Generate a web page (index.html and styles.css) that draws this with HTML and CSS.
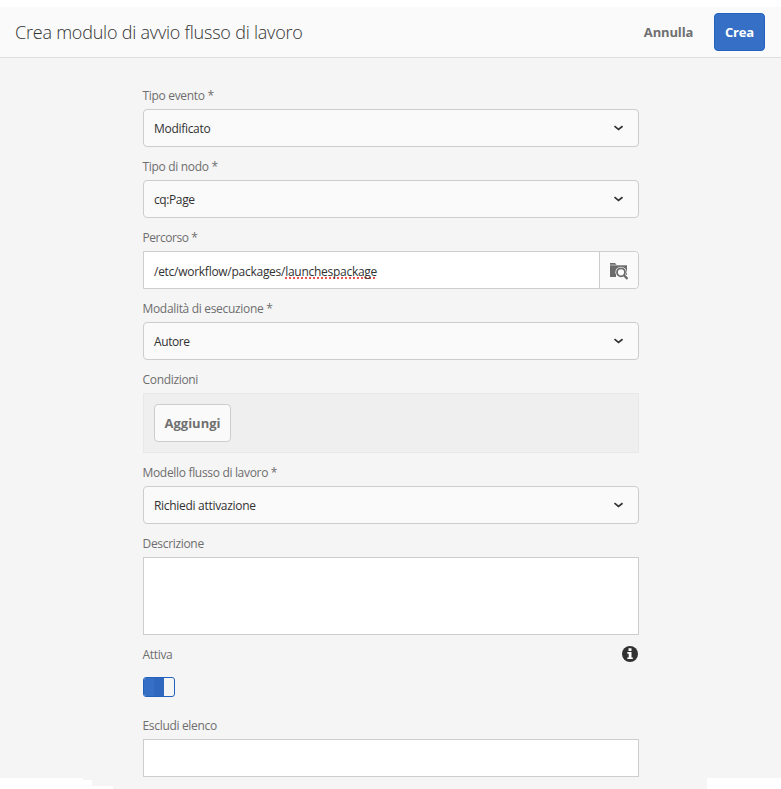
FILE: index.html
```
<!DOCTYPE html>
<html lang="it">
<head>
<meta charset="utf-8">
<title>Crea modulo di avvio flusso di lavoro</title>
<link rel="stylesheet" href="styles.css">
</head>
<body>
<svg class="symbols" aria-hidden="true">
  <symbol id="chevron" viewBox="0 0 10 6"><path d="M1.5 1.200 5.500 4.300 9.500 1.200" fill="none" stroke="#323232" stroke-width="1.700"/></symbol>
</svg>
<header class="topbar">
  <h1 class="title">Crea modulo di avvio flusso di lavoro</h1>
  <div class="actions">
    <button class="btn quiet">Annulla</button>
    <button class="btn primary">Crea</button>
  </div>
</header>
<main class="page">
  <form class="form">
    <label class="label">Tipo evento *</label>
    <div class="field select"><span class="value">Modificato</span><svg class="chevron"><use href="#chevron"/></svg></div>

    <label class="label">Tipo di nodo *</label>
    <div class="field select"><span class="value short">cq:Page</span><svg class="chevron"><use href="#chevron"/></svg></div>

    <label class="label tight">Percorso *</label>
    <div class="field path">
      <div class="path-value">/etc/workflow/packages/<span class="misspelled">launchespackage</span></div>
      <div class="browse">
        <svg class="folder" viewBox="0 0 18 18">
          <path d="M0 1h5l1.500 1.700H0z" fill="#6b6b6b"/>
          <path d="M0 3.300h17V15H0z" fill="#6b6b6b"/>
          <path d="M12 12l6 6" stroke="#fafafa" stroke-width="5"/>
          <path d="M6 13h12v3H6z" fill="#fafafa"/>
          <circle cx="11" cy="10.300" r="5.600" fill="#fafafa"/>
          <circle cx="11" cy="10.300" r="4" fill="none" stroke="#6b6b6b" stroke-width="1.800"/>
          <path d="m13.700 13 3.800 3.900" stroke="#6b6b6b" stroke-width="2.300"/>
        </svg>
      </div>
    </div>

    <label class="label">Modalità di esecuzione *</label>
    <div class="field select"><span class="value short">Autore</span><svg class="chevron"><use href="#chevron"/></svg></div>

    <label class="label">Condizioni</label>
    <div class="conditions"><button type="button" class="btn add">Aggiungi</button></div>

    <label class="label">Modello flusso di lavoro *</label>
    <div class="field select"><span class="value">Richiedi attivazione</span><svg class="chevron"><use href="#chevron"/></svg></div>

    <label class="label">Descrizione</label>
    <div class="field textarea"></div>

    <div class="label-row">
      <label class="label">Attiva</label>
      <svg class="info" viewBox="0 0 16 16">
        <circle cx="8" cy="8" r="8" fill="#323232"/>
        <path d="M6.500 2.300h3v2.600h-3zM5.300 6.100h4.200v5.300h1.300v1.700H5.300v-1.700h1.400V7.800H5.300z" fill="#fff"/>
      </svg>
    </div>
    <div class="switch"><span class="switch-track"></span><span class="knob"></span></div>

    <label class="label">Escludi elenco</label>
    <div class="field text"></div>
  </form>
</main>
<footer class="edge">
  <svg class="edge-shape" viewBox="0 0 781 11"><path d="M0 0h83v2h9v6h21v3H0zM707 0h74v11h-74z" fill="#fff"/></svg>
</footer>
</body>
</html>
```
FILE: styles.css
```
* { box-sizing: border-box; }
body {
  margin: 0;
  padding-top: 7px;
  height: 789px;
  overflow: hidden;
  background: #fff;
  font: 12px/18px "Open Sans", "Noto Sans", sans-serif;
  color: #323232;
}
.symbols { position: absolute; width: 0; height: 0; }
.topbar {
  display: flex;
  align-items: center;
  justify-content: space-between;
  height: 51px;
  padding: 0 16px 0 15px;
  background: #fafafa;
  border-bottom: 1px solid #dedede;
}
.title { margin: 0; font-size: 18px; line-height: 24px; font-weight: 300; letter-spacing: -0.22px; white-space: nowrap; }
.actions { display: flex; align-items: center; gap: 10px; }
.btn {
  display: flex;
  align-items: center;
  justify-content: center;
  height: 38px;
  padding: 0;
  border: 1px solid transparent;
  border-radius: 4px;
  background: none;
  color: #707070;
  font: 700 13px/18px "Open Sans", "Noto Sans", sans-serif;
  letter-spacing: -0.15px;
}
.quiet { width: 71px; }
.primary { width: 51px; background: #3670c6; border-color: #2262bd; color: #fff; }
.page { height: 720px; padding-top: 18px; background: #f5f5f5; }
.form { width: 496px; margin-left: 143px; }
.label { display: block; height: 33px; margin-left: -0.5px; padding-top: 11px; color: #6e6e6e; letter-spacing: -0.32px; }
.tight { letter-spacing: -0.45px; }
.field { height: 38px; border: 1px solid #cdcdcd; background: #fff; }
.select {
  display: flex;
  align-items: center;
  justify-content: space-between;
  padding: 0 15px 0 10px;
  border-radius: 4px;
  background: #fafafa;
}
.value { padding-top: 2px; letter-spacing: -0.3px; }
.short { letter-spacing: -0.4px; }
.chevron { width: 10px; height: 6px; }
.path { display: flex; border-radius: 0 4px 4px 0; }
.path-value { flex: 1; padding: 11px 10px 0; letter-spacing: -0.27px; }
.misspelled { text-decoration: underline dotted #f05050 2px; text-underline-offset: 1px; text-decoration-skip-ink: none; }
.browse {
  display: flex;
  align-items: center;
  justify-content: center;
  width: 39px;
  border-left: 1px solid #cdcdcd;
  border-radius: 0 4px 4px 0;
  background: #fafafa;
}
.folder { width: 18px; height: 18px; margin-top: 2px; }
.conditions { height: 60px; padding: 10px; background: #efefef; border: 1px solid #e8e8e8; }
.add { width: 77px; background: #fafafa; border-color: #cdcdcd; letter-spacing: 0; }
.textarea { height: 78px; }
.label-row { display: flex; justify-content: space-between; }
.info { width: 16px; height: 16px; margin: 11px 1.5px 0 0; }
.switch {
  display: flex;
  width: 32px;
  height: 20px;
  margin: 9px 0;
  border: 1px solid #2262bd;
  border-radius: 3px;
  overflow: hidden;
  background: #f5f5f5;
}
.switch-track { width: 20px; background: linear-gradient(90deg, #3670c6 10px, #2f68be 10px); }
.knob { flex: 1; border-radius: 2px; }
.edge { height: 11px; background: #f5f5f5; }
.edge-shape { display: block; width: 781px; height: 11px; }
```
